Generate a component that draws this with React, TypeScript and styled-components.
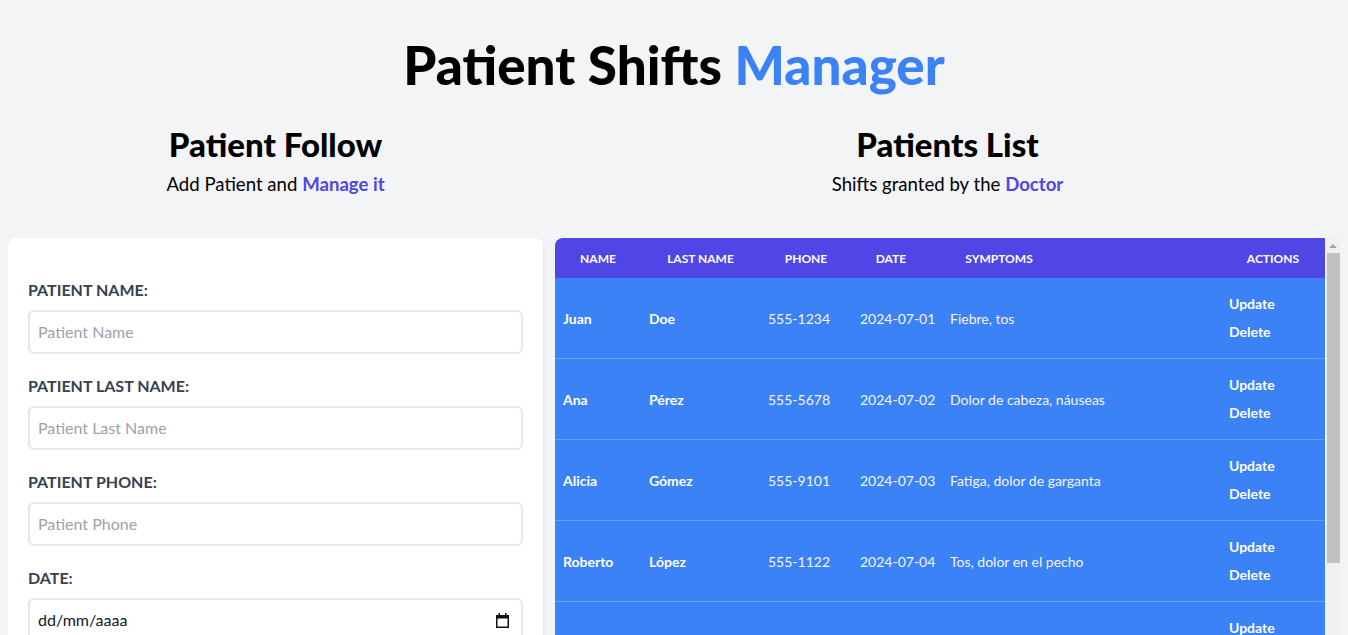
import styled, { createGlobalStyle } from 'styled-components';

const GlobalStyle = createGlobalStyle`
    html {
        overflow: hidden;
    }
    body {
        margin: 8px;
        background: #f3f4f6;
        font-family: Lato, "Open Sans", sans-serif;
        color: #000;
    }
    * {
        box-sizing: border-box;
    }
`;

const Title = styled.h1`
    margin: 30px 0 0;
    text-align: center;
    font-size: 53px;
    line-height: 1;
    font-weight: 900;
`;

const Accent = styled.span`
    color: #3b82f6;
`;

const Columns = styled.div`
    display: grid;
    grid-template-columns: 535px 1fr;
    gap: 12px;
    margin-top: 35px;
`;

const Column = styled.section`
    display: flex;
    flex-direction: column;
    min-width: 0;
`;

const SectionTitle = styled.h2`
    margin: 0;
    text-align: center;
    font-size: 33px;
    line-height: 36px;
    font-weight: 900;
`;

const SectionText = styled.p`
    margin: 8px 0 40px;
    text-align: center;
    font-size: 18.6px;
    line-height: 28px;
`;

const Strong = styled.span`
    color: #4f46e5;
    font-weight: 700;
`;

const Card = styled.form`
    background: #fff;
    border-radius: 8px;
    box-shadow: 0 4px 6px -1px rgba(0, 0, 0, 0.1), 0 2px 4px -2px rgba(0, 0, 0, 0.1);
    padding: 40px 20px;
`;

const Field = styled.div`
    margin-bottom: 20px;
    position: relative;
`;

const Label = styled.label`
    display: block;
    font-size: 16px;
    line-height: 24px;
    font-weight: 700;
    text-transform: uppercase;
    color: #374151;
`;

const Input = styled.input`
    display: block;
    width: 100%;
    margin-top: 8px;
    padding: 8px;
    border: 2px solid #e5e7eb;
    border-radius: 6px;
    font-family: inherit;
    font-size: 16px;
    line-height: 24px;
    color: #111827;
    &::placeholder {
        color: #9ca3af;
    }
    &:focus {
        outline: none;
    }
`;

const TextArea = styled.textarea`
    display: block;
    width: 100%;
    margin-top: 8px;
    padding: 8px;
    border: 2px solid #e5e7eb;
    border-radius: 6px;
    font-family: inherit;
    font-size: 16px;
`;

const Submit = styled.button`
    width: 100%;
    padding: 12px;
    border: none;
    background: #4f46e5;
    color: #fff;
    text-transform: uppercase;
    font-weight: 700;
`;

const CalendarIcon = styled.svg`
    position: absolute;
    right: 14px;
    bottom: 14px;
    pointer-events: none;
`;

// the table box with its own (drawn) scroll rail on the right
const TableFrame = styled.div`
    display: flex;
    height: 635px;
    border-radius: 8px 0 0 0;
    overflow: hidden;
`;

const TableBody = styled.div`
    flex: 1;
    min-width: 0;
    overflow: hidden;
`;

const ScrollRail = styled.div`
    display: flex;
    flex-direction: column;
    align-items: center;
    width: 15px;
    background: #f1f1f1;
`;

const RailArrow = styled.div`
    width: 0;
    height: 0;
    margin: 6px 0 5px;
    border-left: 4px solid transparent;
    border-right: 4px solid transparent;
    border-bottom: 4px solid #a3a3a3;
`;

const RailThumb = styled.div`
    width: 13px;
    height: 310px;
    margin-left: 1px;
    background: #c1c1c1;
`;

const HeadRow = styled.div`
    display: grid;
    grid-template-columns: 86px 119px 92px 78px 138px 1fr 104px;
    height: 40px;
    align-items: center;
    background: #4f46e5;
    color: #fff;
    font-size: 12px;
    font-weight: 700;
    text-transform: uppercase;
`;

const HeadCell = styled.div`
    text-align: center;
`;

const Row = styled.div`
    display: grid;
    grid-template-columns: 86px 119px 92px 90px 1fr 104px;
    align-items: center;
    height: 81px;
    background: #3b82f6;
    border-bottom: 1px solid #60a5fa;
    font-size: 14px;
`;

const Cell = styled.div<{ $bold?: boolean }>`
    padding-left: 8px;
    color: ${({ $bold }) => ($bold ? '#fff' : '#f3f4f6')};
    font-weight: ${({ $bold }) => ($bold ? 700 : 400)};
`;

const Actions = styled.div`
    display: flex;
    flex-direction: column;
    gap: 8px;
    padding-left: 8px;
`;

const ActionButton = styled.button`
    align-self: flex-start;
    padding: 0;
    border: none;
    background: none;
    color: #fff;
    font-family: inherit;
    font-size: 14px;
    line-height: 20px;
    font-weight: 700;
    cursor: pointer;
`;

const patients = [
    ['Juan', 'Doe', '555-1234', '2024-07-01', 'Fiebre, tos'],
    ['Ana', 'Pérez', '555-5678', '2024-07-02', 'Dolor de cabeza, náuseas'],
    ['Alicia', 'Gómez', '555-9101', '2024-07-03', 'Fatiga, dolor de garganta'],
    ['Roberto', 'López', '555-1122', '2024-07-04', 'Tos, dolor en el pecho'],
    ['Carlos', 'Martínez', '555-3344', '2024-07-05', 'Dolor abdominal'],
    ['Lucía', 'Fernández', '555-5566', '2024-07-06', 'Mareos, vómitos'],
    ['Miguel', 'Sánchez', '555-7788', '2024-07-07', 'Dolor de espalda'],
];

const App = (): JSX.Element => {
    return (
        <>
            <GlobalStyle />
            <Title>
                Patient Shifts <Accent>Manager</Accent>
            </Title>
            <Columns>
                <Column>
                    <SectionTitle>Patient Follow</SectionTitle>
                    <SectionText>
                        Add Patient and <Strong>Manage it</Strong>
                    </SectionText>
                    <Card onSubmit={(e) => e.preventDefault()}>
                        <Field>
                            <Label htmlFor="name">Patient Name:</Label>
                            <Input id="name" type="text" placeholder="Patient Name" />
                        </Field>
                        <Field>
                            <Label htmlFor="lastname">Patient Last Name:</Label>
                            <Input id="lastname" type="text" placeholder="Patient Last Name" />
                        </Field>
                        <Field>
                            <Label htmlFor="phone">Patient Phone:</Label>
                            <Input id="phone" type="tel" placeholder="Patient Phone" />
                        </Field>
                        <Field>
                            <Label htmlFor="date">Date:</Label>
                            <Input id="date" type="text" defaultValue="dd/mm/aaaa" />
                            <CalendarIcon width="13" height="15" viewBox="0 0 13 15">
                                <rect x="0.75" y="2.75" width="11.5" height="11.5" fill="none" stroke="#111" strokeWidth="1.5" />
                                <rect x="0" y="2" width="13" height="3.5" fill="#111" />
                                <rect x="2.5" y="0" width="1.5" height="3" fill="#111" />
                                <rect x="9" y="0" width="1.5" height="3" fill="#111" />
                            </CalendarIcon>
                        </Field>
                        <Field>
                            <Label htmlFor="symptoms">Symptoms:</Label>
                            <TextArea id="symptoms" placeholder="Describe the symptoms" />
                        </Field>
                        <Submit type="submit">Add Patient</Submit>
                    </Card>
                </Column>
                <Column>
                    <SectionTitle>Patients List</SectionTitle>
                    <SectionText>
                        Shifts granted by the <Strong>Doctor</Strong>
                    </SectionText>
                    <TableFrame>
                        <TableBody>
                            <HeadRow>
                                <HeadCell>Name</HeadCell>
                                <HeadCell>Last Name</HeadCell>
                                <HeadCell>Phone</HeadCell>
                                <HeadCell>Date</HeadCell>
                                <HeadCell>Symptoms</HeadCell>
                                <span />
                                <HeadCell>Actions</HeadCell>
                            </HeadRow>
                            {patients.map(([name, last, phone, date, symptoms]) => (
                                <Row key={name}>
                                    <Cell $bold>{name}</Cell>
                                    <Cell $bold>{last}</Cell>
                                    <Cell>{phone}</Cell>
                                    <Cell>{date}</Cell>
                                    <Cell>{symptoms}</Cell>
                                    <Actions>
                                        <ActionButton type="button">Update</ActionButton>
                                        <ActionButton type="button">Delete</ActionButton>
                                    </Actions>
                                </Row>
                            ))}
                        </TableBody>
                        <ScrollRail aria-hidden="true">
                            <RailArrow />
                            <RailThumb />
                        </ScrollRail>
                    </TableFrame>
                </Column>
            </Columns>
        </>
    );
};

export default App;
